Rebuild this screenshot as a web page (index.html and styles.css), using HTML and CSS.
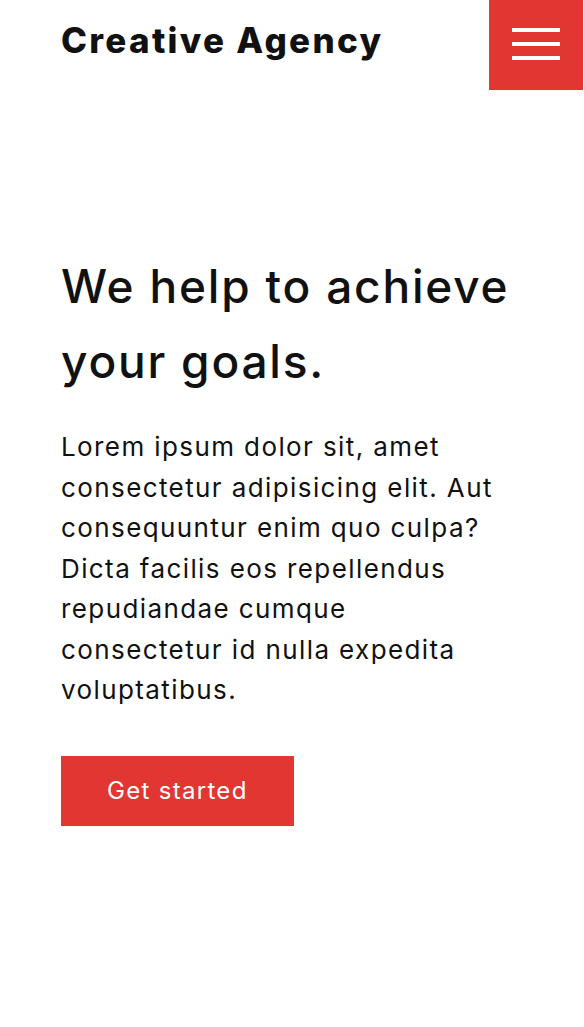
FILE: index.html
```html
<!DOCTYPE html>
<html lang="en">
<head>
<meta charset="utf-8">
<title>Creative Agency</title>
<link rel="stylesheet" href="styles.css">
</head>
<body>
<header class="site-header">
  <a class="logo" href="#">Creative Agency</a>
  <button class="menu-btn" aria-label="Menu">
    <span class="menu-line"></span>
    <span class="menu-line"></span>
    <span class="menu-line"></span>
  </button>
</header>
<main class="hero">
  <h1 class="hero-title">We help to achieve your goals.</h1>
  <p class="hero-text">Lorem ipsum dolor sit, amet consectetur adipisicing elit. Aut consequuntur enim quo culpa? Dicta facilis eos repellendus repudiandae cumque consectetur id nulla expedita voluptatibus.</p>
  <a class="btn" href="#">Get started</a>
</main>
</body>
</html>
```
FILE: styles.css
```css
* { box-sizing: border-box; }
html, body { margin: 0; padding: 0; background: #fff; }
body {
  font-family: Inter, "Noto Sans", "DejaVu Sans", sans-serif;
  color: #111;
  width: 584px;
  min-height: 1027px;
}
.site-header {
  display: flex;
  justify-content: space-between;
  align-items: flex-start;
  height: 90px;
  padding-left: 61px;
  padding-right: 1px;
}
.logo {
  margin-top: 19px;
  font-size: 35px;
  line-height: 1.2;
  font-weight: 800;
  color: #111;
  text-decoration: none;
  letter-spacing: 2.3px;
}
.menu-btn {
  width: 94px;
  height: 90px;
  border: 0;
  margin: 0;
  padding: 28px 0 0 23px;
  background: #e23632;
  display: flex;
  flex-direction: column;
  align-items: flex-start;
  gap: 10px;
  cursor: pointer;
}
.menu-line {
  display: block;
  width: 48px;
  height: 4px;
  background: #fff;
}
.hero {
  padding: 159px 61px 0 61px;
}
.hero-title {
  margin: 0;
  font-size: 46px;
  line-height: 75px;
  font-weight: 500;
  letter-spacing: 1.8px;
  color: #111;
}
.hero-text {
  max-width: 450px;
  margin: 28px 0 0 0;
  font-size: 26px;
  line-height: 40.5px;
  font-weight: 400;
  letter-spacing: 1.4px;
  color: #111;
}
.btn {
  display: inline-block;
  margin-top: 45px;
  padding: 17px 46px;
  font-size: 24px;
  line-height: 36px;
  font-weight: 400;
  letter-spacing: 1.3px;
  color: #fff;
  background: #e23632;
  text-decoration: none;
}
```
